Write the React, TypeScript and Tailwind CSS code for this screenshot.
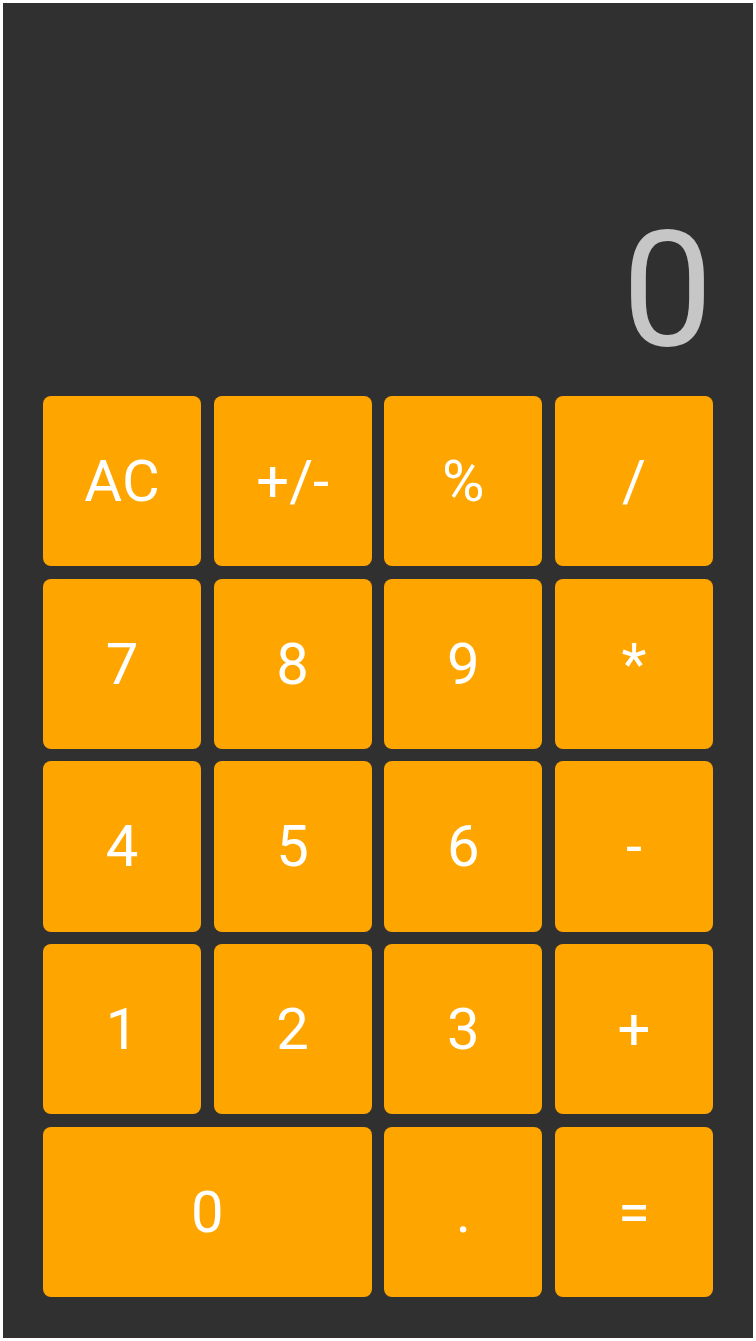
const keys: { label: string; wide?: boolean }[] = [
  { label: 'AC' }, { label: '+/-' }, { label: '%' }, { label: '/' },
  { label: '7' }, { label: '8' }, { label: '9' }, { label: '*' },
  { label: '4' }, { label: '5' }, { label: '6' }, { label: '-' },
  { label: '1' }, { label: '2' }, { label: '3' }, { label: '+' },
  { label: '0', wide: true }, { label: '.' }, { label: '=' },
];

function Key({ label, wide }: { label: string; wide?: boolean }) {
  return (
    <button
      className={`${wide ? 'col-span-2' : ''} flex items-center justify-center rounded-lg bg-[#ffa500] text-[58px] leading-none text-white`}
    >
      {label}
    </button>
  );
}

export default function App() {
  return (
    <div className="h-[1341px] w-[756px] bg-white p-[3px] font-['Roboto',sans-serif]">
      <div className="flex h-full w-full flex-col bg-[#303030] px-[40px] pb-[41px]">
        <div className="flex h-[393px] items-end justify-end pb-[25px]">
          <span className="text-[162px] leading-none text-[#c6c6c6]">0</span>
        </div>
        <div className="grid flex-1 grid-cols-4 grid-rows-5 gap-x-[12.67px] gap-y-[12.5px]">
          {keys.map((k) => (
            <Key key={k.label} label={k.label} wide={k.wide} />
          ))}
        </div>
      </div>
    </div>
  );
}
